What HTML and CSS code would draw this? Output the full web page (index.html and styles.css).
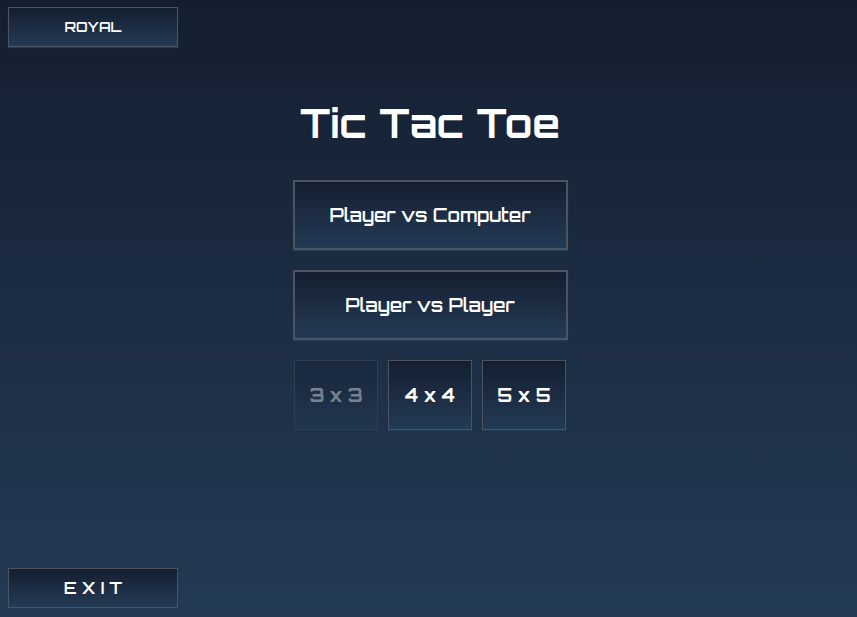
FILE: index.html
```html
<!DOCTYPE html>
<html lang="en">
<head>
<meta charset="utf-8">
<meta name="viewport" content="width=device-width, initial-scale=1">
<title>Tic Tac Toe</title>
<link rel="stylesheet" href="styles.css">
</head>
<body>
<header><button type="button" class="button corner royal">ROYAL</button></header>
<main class="menu">
<h1 class="title">Tic Tac Toe</h1>
<button type="button" class="button mode">Player vs Computer</button>
<button type="button" class="button mode">Player vs Player</button>
<div class="sizes">
<button type="button" class="button size" disabled>3 x 3</button>
<button type="button" class="button size">4 x 4</button>
<button type="button" class="button size">5 x 5</button>
</div>
</main>
<footer><button type="button" class="button corner exit">E X I T</button></footer>
</body>
</html>
```
FILE: styles.css
```css
* {
  box-sizing: border-box;
}

body {
  display: flex;
  flex-direction: column;
  min-height: 100vh;
  margin: 0;
  padding: 7px 5px 9px 8px;
  background: linear-gradient(#141e30, #243b55);
  color: #fff;
  font-family: Orbitron, "DejaVu Sans", sans-serif;
}

header,
footer {
  display: flex;
}

.button {
  padding: 0;
  border: 1px solid #4d545f;
  background: linear-gradient(#141e30, #243b55);
  box-shadow: 0 1px 1px #243b55;
  color: #fff;
  font-family: inherit;
  font-weight: 600;
  white-space: nowrap;
}

.button:disabled {
  opacity: 0.4;
}

.corner {
  width: 170px;
  height: 40px;
  padding-bottom: 2px;
}

.royal {
  font-size: 14px;
}

.exit {
  font-size: 17px;
}

.menu {
  display: flex;
  flex: 1;
  flex-direction: column;
  align-items: center;
  gap: 20px;
  padding-top: 52px;
}

.title {
  margin: 0 0 13px;
  font-size: 40px;
  line-height: 48px;
  font-weight: 700;
}

.mode {
  width: 275px;
  height: 70px;
  border-width: 2px;
  font-size: 18px;
}

.sizes {
  display: flex;
  gap: 10px;
}

.size {
  width: 84px;
  height: 70px;
  font-size: 18px;
  font-weight: 700;
}
```
